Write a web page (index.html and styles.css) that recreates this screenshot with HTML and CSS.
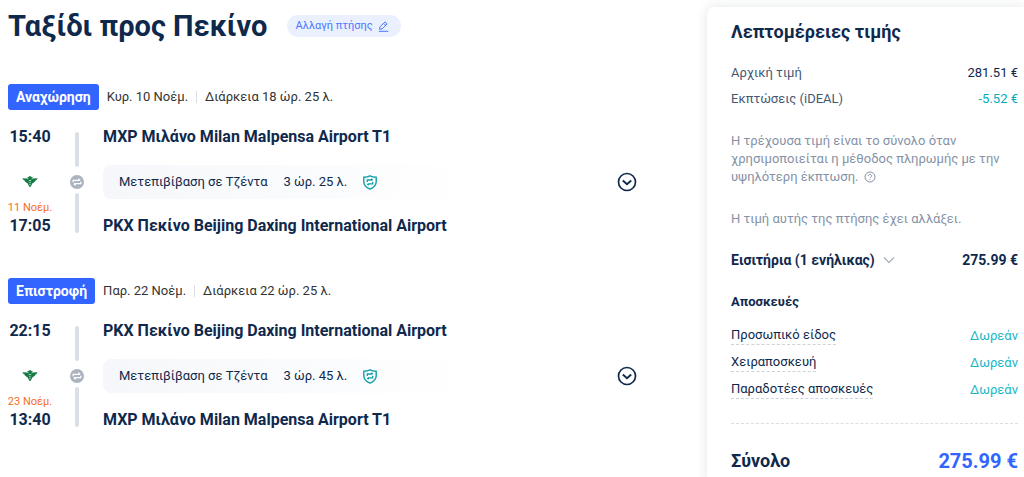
FILE: index.html
```html
<!DOCTYPE html>
<html lang="el">
<head>
    <meta charset="UTF-8">
    <meta name="viewport" content="width=device-width, initial-scale=1.0">
    <title>Ταξίδι προς Πεκίνο</title>
    <link rel="stylesheet" href="styles.css">
</head>
<body>
    <!-- Shared icons -->
    <svg class="sprite" aria-hidden="true">
        <symbol id="airline" viewBox="0 0 16 12">
            <path d="M.3 2.300 5.600 2.600 6.200 3.400 6.300 2.200 5 1.700 8 0l3 1.700-1.300.5.1 1.200.6-.8 5.300-.3-1.400 1.900-.9.300-.4 1.200-1 .2-.5 1.200-1.100.2-.9 2L8 11.600 6.500 9.300l-.9-2-1.100-.2L4 5.900l-1-.2-.4-1.200-.9-.3z" fill="#167a45"/>
            <path d="M6.800 4.900 8 4.300l1.200.6M7.200 6.700h1.600M7.400 8.500h1.200" fill="none" stroke="#fff" stroke-width=".7"/>
        </symbol>
        <symbol id="transfer" viewBox="0 0 14 14">
            <circle cx="7" cy="7" r="7" fill="#acb4bf"/>
            <path d="M3.200 7.200V5.400h6.600M8.400 3.800l1.700 1.600M10.800 6.800v1.900H4.200M5.600 10.300 3.900 8.700" fill="none" stroke="#fff" stroke-width="1.300"/>
        </symbol>
        <symbol id="shield" viewBox="0 0 14 15">
            <path d="M7 .8c1.800 1 3.800 1.400 6.200 1.500v4.500c0 3.300-2.500 5.800-6.200 7.400C3.300 12.600.8 10.100.8 6.800V2.300C3.200 2.200 5.200 1.800 7 .8z" fill="none" stroke="#109fa8" stroke-width="1.400"/>
            <path d="M4.300 7V5h5M8.300 3.700 9.700 5M9.700 6.800v2.100H4.700M5.700 10.200 4.300 8.900" fill="none" stroke="#109fa8" stroke-width="1.300"/>
        </symbol>
        <symbol id="expand" viewBox="0 0 20 20">
            <circle cx="10" cy="10" r="8.500" fill="none" stroke="#0f294d" stroke-width="1.700"/>
            <path d="m5.800 8.500 4.200 3.700 4.200-3.700" fill="none" stroke="#0f294d" stroke-width="1.900"/>
        </symbol>
    </svg>

    <div class="page">
        <main class="trip">
            <div class="trip-header">
                <h1>Ταξίδι προς Πεκίνο</h1>
                <button type="button" class="change-btn">
                    Αλλαγή πτήσης
                    <svg width="11" height="11" viewBox="0 0 11 11" fill="none" stroke="currentColor"><path d="M1.500 8.300 2 5.800 7 .9l2.100 2-4.900 4.900zM5.600 2.300l2 2M.8 10.300h9.500"/></svg>
                </button>
            </div>

            <!-- Outbound -->
            <section class="leg">
                <div class="leg-header">
                    <span class="tag">Αναχώρηση</span>
                    <span class="leg-date">Κυρ. 10 Νοέμ.</span>
                    <span class="leg-duration">Διάρκεια 18 ώρ. 25 λ.</span>
                </div>
                <div class="leg-body">
                    <div class="times">
                        <div class="time">15:40</div>
                        <svg class="airline"><use href="#airline"/></svg>
                        <div class="next-day">11 Νοέμ.</div>
                        <div class="time">17:05</div>
                    </div>
                    <div class="rail">
                        <div class="rail-top"></div>
                        <svg class="transfer"><use href="#transfer"/></svg>
                        <div class="rail-bottom"></div>
                    </div>
                    <div class="stops">
                        <div class="airport">MXP Μιλάνο Milan Malpensa Airport T1</div>
                        <div class="layover">
                            <div class="layover-info">
                                <span>Μετεπιβίβαση σε Τζέντα</span>
                                <span>3 ώρ. 25 λ.</span>
                                <svg class="shield"><use href="#shield"/></svg>
                            </div>
                            <button type="button" class="expand-btn" aria-label="Λεπτομέρειες αναχώρησης"><svg><use href="#expand"/></svg></button>
                        </div>
                        <div class="airport">PKX Πεκίνο Beijing Daxing International Airport</div>
                    </div>
                </div>
            </section>

            <!-- Return -->
            <section class="leg">
                <div class="leg-header">
                    <span class="tag">Επιστροφή</span>
                    <span class="leg-date">Παρ. 22 Νοέμ.</span>
                    <span class="leg-duration">Διάρκεια 22 ώρ. 25 λ.</span>
                </div>
                <div class="leg-body">
                    <div class="times">
                        <div class="time">22:15</div>
                        <svg class="airline"><use href="#airline"/></svg>
                        <div class="next-day">23 Νοέμ.</div>
                        <div class="time">13:40</div>
                    </div>
                    <div class="rail">
                        <div class="rail-top"></div>
                        <svg class="transfer"><use href="#transfer"/></svg>
                        <div class="rail-bottom"></div>
                    </div>
                    <div class="stops">
                        <div class="airport">PKX Πεκίνο Beijing Daxing International Airport</div>
                        <div class="layover">
                            <div class="layover-info">
                                <span>Μετεπιβίβαση σε Τζέντα</span>
                                <span>3 ώρ. 45 λ.</span>
                                <svg class="shield"><use href="#shield"/></svg>
                            </div>
                            <button type="button" class="expand-btn" aria-label="Λεπτομέρειες επιστροφής"><svg><use href="#expand"/></svg></button>
                        </div>
                        <div class="airport">MXP Μιλάνο Milan Malpensa Airport T1</div>
                    </div>
                </div>
            </section>
        </main>

        <!-- Price details -->
        <aside class="price-card">
            <h2>Λεπτομέρειες τιμής</h2>
            <div class="row muted"><span>Αρχική τιμή</span><span class="amount">281.51 €</span></div>
            <div class="row muted"><span>Εκπτώσεις (iDEAL)</span><span class="discount">-5.52 €</span></div>
            <p class="note">Η τρέχουσα τιμή είναι το σύνολο όταν χρησιμοποιείται η μέθοδος πληρωμής με την υψηλότερη έκπτωση.
                <svg class="help" viewBox="0 0 12 12" fill="none" stroke="currentColor"><circle cx="6" cy="6" r="5"/><path d="M4.400 4.900c0-2 3.200-2 3.200 0 0 1-1.600 1.100-1.600 2.200M6 7.900v1"/></svg>
            </p>
            <p class="note">Η τιμή αυτής της πτήσης έχει αλλάξει.</p>
            <div class="row tickets">
                <button type="button" class="toggle">Εισιτήρια (1 ενήλικας)
                    <svg width="12" height="8" viewBox="0 0 12 8" fill="none" stroke="#acb4bf" stroke-width="1.300"><path d="m1 1.500 5 5 5-5"/></svg>
                </button>
                <span>275.99 €</span>
            </div>
            <h3>Αποσκευές</h3>
            <div class="row bag"><span class="hint">Προσωπικό είδος</span><span class="free">Δωρεάν</span></div>
            <div class="row bag"><span class="hint">Χειραποσκευή</span><span class="free">Δωρεάν</span></div>
            <div class="row bag"><span class="hint">Παραδοτέες αποσκευές</span><span class="free">Δωρεάν</span></div>
            <div class="row total"><span>Σύνολο</span><span class="total-price">275.99 €</span></div>
        </aside>
    </div>
</body>
</html>
```
FILE: styles.css
```css
* {
    box-sizing: border-box;
}
body {
    font-family: Roboto, 'Liberation Sans', sans-serif;
    margin: 0;
    font-size: 13px;
    line-height: 18px;
    color: #0f294d;
    background: #fff;
}
button {
    font: inherit;
    color: inherit;
    border: 0;
    padding: 0;
    background: none;
    cursor: pointer;
}
h1, h2, h3, p {
    margin: 0;
}
.sprite {
    display: none;
}
.page {
    display: flex;
    min-height: 100vh;
    overflow: hidden;
}

/* Trip */
.trip {
    flex: 1;
    min-width: 0;
    padding: 6px 70px 0 8px;
}
.trip-header {
    display: flex;
    align-items: center;
    gap: 20px;
    margin-bottom: 38px;
}
h1 {
    font-size: 29px;
    line-height: 40px;
}
.change-btn {
    display: flex;
    align-items: center;
    gap: 5px;
    height: 22px;
    padding: 0 12px 0 8px;
    font-size: 11px;
    color: #4978ff;
    background: #ebf0ff;
    border-radius: 11px;
}
.leg {
    margin-bottom: 42px;
}
.leg-header {
    display: flex;
    align-items: center;
    margin-bottom: 17px;
    color: #333;
}
.tag {
    padding: 4px 8px;
    margin-right: 8px;
    font-size: 14px;
    font-weight: bold;
    color: #fff;
    background: #3264ff;
    border-radius: 3px;
}
.leg-duration {
    margin-left: 8px;
    padding-left: 8px;
    line-height: 12px;
    border-left: 1px solid #dadfe6;
}
.leg-body {
    display: flex;
}
.times {
    display: flex;
    flex-direction: column;
    align-items: center;
    width: 44px;
}
.time, .airport {
    font-size: 16px;
    line-height: 20px;
    font-weight: bold;
}
.airline {
    width: 16px;
    height: 12px;
    margin: 29px 0 12px;
}
.next-day {
    font-size: 11px;
    line-height: 16px;
    color: #f56e1e;
    white-space: nowrap;
}
.rail {
    display: flex;
    flex-direction: column;
    align-items: center;
    width: 50px;
    padding: 5px 0 3px;
}
.rail-top, .rail-bottom {
    width: 4px;
    background: #dadfe6;
    border-radius: 2px;
}
.rail-top {
    height: 35px;
}
.rail-bottom {
    flex: 1;
}
.transfer {
    width: 14px;
    height: 14px;
    margin: 8px 0 4px;
}
.stops {
    flex: 1;
    padding-left: 1px;
}
.layover {
    display: flex;
    align-items: center;
    justify-content: space-between;
    margin: 18px 0 17px;
}
.layover-info {
    display: flex;
    align-items: center;
    gap: 16px;
    flex: 0 1 370px;
    height: 34px;
    padding-left: 16px;
    background: linear-gradient(90deg, #f5f7fa, #fff);
    border-radius: 8px;
}
.shield {
    width: 14px;
    height: 15px;
}
.expand-btn, .expand-btn svg {
    display: block;
    width: 20px;
    height: 20px;
}

/* Price card */
.price-card {
    width: 317px;
    margin-top: 7px;
    padding: 12px 6px 0 24px;
    background: #fff;
    border-radius: 8px 0 0 0;
    box-shadow: 0 0 12px rgba(15, 41, 77, 0.12);
}
h2 {
    font-size: 18px;
    line-height: 26px;
    margin-bottom: 19px;
}
.row {
    display: flex;
    align-items: center;
    justify-content: space-between;
    margin-bottom: 8px;
}
.muted {
    color: #455873;
}
.amount {
    color: #0f294d;
}
.discount {
    color: #06aebd;
}
.note {
    margin-top: 24px;
    color: #8592a6;
}
.help {
    width: 12px;
    height: 12px;
    margin-left: 2px;
    vertical-align: -2px;
}
.tickets {
    margin: 23px 0 24px;
    font-size: 14px;
    font-weight: bold;
}
.toggle {
    display: flex;
    align-items: center;
    gap: 8px;
}
h3 {
    font-size: 13px;
    margin-bottom: 15px;
}
.hint {
    border-bottom: 1px dashed #ced2d9;
}
.free {
    color: #19b6c4;
}
.total {
    margin-top: 24px;
    padding-top: 24px;
    border-top: 1px dashed #dadfe6;
    font-size: 18px;
    line-height: 26px;
    font-weight: bold;
}
.total-price {
    font-size: 20px;
    color: #3264ff;
}
```
